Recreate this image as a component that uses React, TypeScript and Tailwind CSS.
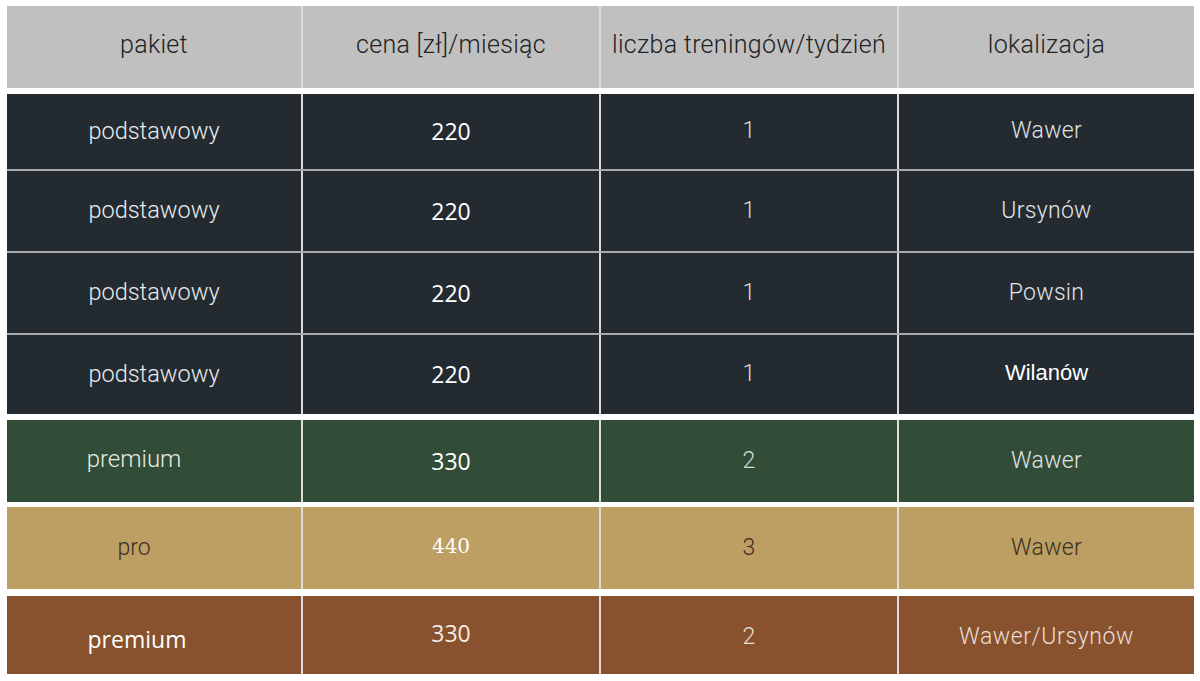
const cols = "grid grid-cols-[296px_298px_298px_295px]";

type Row = {
  bg: string;
  h: string;
  pakiet: string;
  cena: string;
  ile: string;
  lok: string;
  pakietClass?: string;
  cenaClass?: string;
  ileClass?: string;
  lokClass?: string;
  border?: boolean;
};

const light = "font-['Roboto',sans-serif] font-light";

function Cell({ children, className = "", last = false }: { children: React.ReactNode; className?: string; last?: boolean }) {
  return (
    <div
      className={
        "flex items-center justify-center " +
        (last ? "" : "border-r-2 border-[#dcdcdc] ") +
        className
      }
    >
      {children}
    </div>
  );
}

function DataRow({ row }: { row: Row }) {
  return (
    <div className={`${cols} ${row.bg} ${row.h} ${row.border ? "border-t-2 border-[#a9adb0]" : ""}`}>
      <Cell className={row.pakietClass ?? `${light} text-[23.5px] text-[#e9ecee]`}>{row.pakiet}</Cell>
      <Cell className={row.cenaClass ?? "font-['Open_Sans',sans-serif] text-[23px] text-white"}>{row.cena}</Cell>
      <Cell className={row.ileClass ?? `${light} text-[23px] text-[#d8dcdf]`}>{row.ile}</Cell>
      <Cell last className={row.lokClass ?? `${light} text-[23px] tracking-[0.3px] text-[#e1e4e6]`}>{row.lok}</Cell>
    </div>
  );
}

const dark: Row[] = [
  { bg: "bg-[#232b31]", h: "h-[75px]", pakiet: "podstawowy", cena: "220", ile: "1", lok: "Wawer" },
  { bg: "bg-[#232b31]", h: "h-[82px]", pakiet: "podstawowy", cena: "220", ile: "1", lok: "Ursynów", border: true },
  { bg: "bg-[#232b31]", h: "h-[82px]", pakiet: "podstawowy", cena: "220", ile: "1", lok: "Powsin", border: true },
  {
    bg: "bg-[#232b31]",
    h: "h-[81px]",
    pakiet: "podstawowy",
    cena: "220",
    ile: "1",
    lok: "Wilanów",
    border: true,
    lokClass: "font-['Liberation_Sans',sans-serif] text-[22px] text-white pb-1",
  },
];

export default function App() {
  return (
    <div className="min-h-[681px] bg-white pt-[6px] pl-[7px]">
      <div className="w-[1187px]">
        <div className={`${cols} h-[82px] bg-[#c0c0c0] ${light} text-[25px] tracking-[0.3px] text-[#222222]`}>
          <Cell className="pb-1">pakiet</Cell>
          <Cell className="pb-1">cena [zł]/miesiąc</Cell>
          <Cell className="pb-1">liczba treningów/tydzień</Cell>
          <Cell last className="pb-1">lokalizacja</Cell>
        </div>

        <div className="mt-[6px]">
          {dark.map((r, i) => (
            <DataRow key={i} row={r} />
          ))}
        </div>

        <div className="mt-[6px]">
          <DataRow
            row={{
              bg: "bg-[#314d37]",
              h: "h-[82px]",
              pakiet: "premium",
              cena: "330",
              ile: "2",
              lok: "Wawer",
              pakietClass: `${light} text-[24px] text-[#e6ebe6] pr-[40px] pb-1`,
            }}
          />
        </div>

        <div className="mt-[5px]">
          <DataRow
            row={{
              bg: "bg-[#bd9e63]",
              h: "h-[82px]",
              pakiet: "pro",
              cena: "440",
              ile: "3",
              lok: "Wawer",
              pakietClass: `${light} text-[23px] text-[#3a3020] pr-[40px]`,
              cenaClass: "font-['DejaVu_Serif',serif] text-[20px] text-white pb-1",
              ileClass: `${light} text-[23px] text-[#3a3020]`,
              lokClass: `${light} text-[23px] tracking-[0.3px] text-[#3a3020]`,
            }}
          />
        </div>

        <div className="mt-[7px]">
          <DataRow
            row={{
              bg: "bg-[#87522d]",
              h: "h-[78px]",
              pakiet: "premium",
              cena: "330",
              ile: "2",
              lok: "Wawer/Ursynów",
              pakietClass: "font-['Open_Sans',sans-serif] text-[23px] text-white pr-[34px] pt-2",
              cenaClass: "font-['Open_Sans',sans-serif] text-[23px] text-[#f3ece6] pb-1",
              ileClass: `${light} text-[23px] text-[#eadfd6] pt-1`,
              lokClass: `${light} text-[23px] tracking-[0.6px] text-[#eadfd6] pt-1`,
            }}
          />
        </div>
      </div>
    </div>
  );
}
